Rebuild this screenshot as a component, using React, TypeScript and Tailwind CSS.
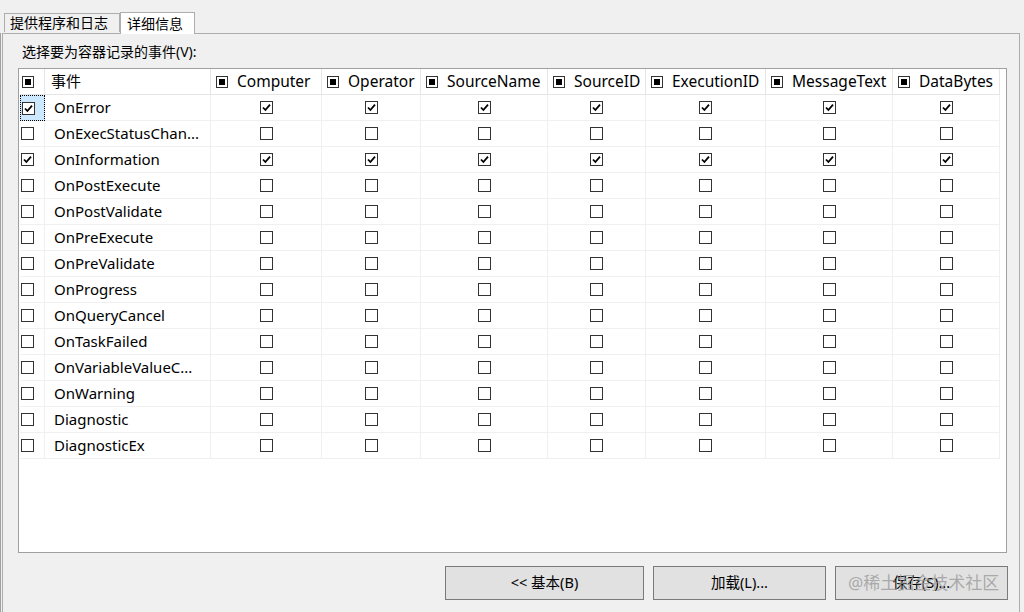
import React from 'react';

const columns = ['Computer', 'Operator', 'SourceName', 'SourceID', 'ExecutionID', 'MessageText', 'DataBytes'];

const events: { name: string; on: boolean }[] = [
  { name: 'OnError', on: true },
  { name: 'OnExecStatusChan...', on: false },
  { name: 'OnInformation', on: true },
  { name: 'OnPostExecute', on: false },
  { name: 'OnPostValidate', on: false },
  { name: 'OnPreExecute', on: false },
  { name: 'OnPreValidate', on: false },
  { name: 'OnProgress', on: false },
  { name: 'OnQueryCancel', on: false },
  { name: 'OnTaskFailed', on: false },
  { name: 'OnVariableValueC...', on: false },
  { name: 'OnWarning', on: false },
  { name: 'Diagnostic', on: false },
  { name: 'DiagnosticEx', on: false },
];

const gridCols = 'grid grid-cols-[25px_166px_111px_99px_127px_98px_120px_127px_107px]';

function CheckBox({ checked }: { checked: boolean }) {
  return (
    <span className="flex h-[13px] w-[13px] items-center justify-center border border-[#333333] bg-white">
      {checked && (
        <svg width="9" height="9" viewBox="0 0 9 9">
          <path d="M1 4.5 L3.4 7 L8 1.6" fill="none" stroke="#000" strokeWidth={1.8} />
        </svg>
      )}
    </span>
  );
}

function MixedBox() {
  return (
    <span className="flex h-[12px] w-[12px] items-center justify-center border border-[#333333] bg-white">
      <span className="h-[6px] w-[6px] bg-black" />
    </span>
  );
}

export default function App() {
  return (
    <div
      className="relative h-[612px] w-[1024px] overflow-hidden bg-[#f0f0f0] text-[15px] text-black"
      style={{ fontFamily: '"Noto Sans", "Noto Sans CJK SC", sans-serif' }}
    >
      {/* tabs */}
      <div className="flex h-[33px] items-end pl-[4px]">
        <div className="mb-[1px] flex h-[19px] w-[116px] items-center border border-b-0 border-[#adadad] bg-[#f0f0f0] pl-[5px] text-[14px] leading-none">
          提供程序和日志
        </div>
        <div className="relative z-10 -mb-[1px] flex h-[22px] w-[75px] items-center border border-b-0 border-[#adadad] bg-white pl-[6px] text-[14px] leading-none">
          详细信息
        </div>
      </div>

      {/* tab page */}
      <div className="h-[579px] w-[1020px] border-l border-[#a0a0a0] pl-[1px]">
        <div className="h-full w-full border-l border-t border-r border-[#adadad] bg-[#f0f0f0] pl-[15px] pr-[11px]">
          <div className="pl-[4px] pt-[8px] text-[14px] leading-[20px]">选择要为容器记录的事件(V):</div>

          <div className="mt-[6px] h-[485px] w-[989px] border border-[#a0a0a0] bg-white pl-[1px]">
            {/* header */}
            <div className={`${gridCols} h-[26px] text-[15.5px]`}>
              <div className="flex items-center border-r border-b border-[#e5e5e5] pl-[2px]">
                <MixedBox />
              </div>
              <div className="flex items-center border-r border-b border-[#e5e5e5] pl-[6px] text-[15px]">事件</div>
              {columns.map((c) => (
                <div key={c} className="flex items-center gap-[9px] border-r border-b border-[#e5e5e5] pl-[5px]">
                  <MixedBox />
                  <span>{c}</span>
                </div>
              ))}
            </div>

            {/* rows */}
            {events.map((e, i) => (
              <div key={e.name} className={`${gridCols} h-[26px]`}>
                <div
                  className={`flex items-center border-b border-r pl-[1px] ${
                    i === 0
                      ? 'border border-dotted border-black bg-[#cce8ff]'
                      : 'border-[#f0f0f0]'
                  }`}
                >
                  <CheckBox checked={e.on} />
                </div>
                <div className="flex items-center border-r border-b border-[#f0f0f0] pl-[9px]">{e.name}</div>
                {columns.map((c) => (
                  <div key={c} className="flex items-center justify-center border-r border-b border-[#f0f0f0]">
                    <CheckBox checked={e.on} />
                  </div>
                ))}
              </div>
            ))}
          </div>

          {/* buttons */}
          <div className="mt-[13px] flex justify-end gap-[9px]">
            <button className="h-[34px] w-[199px] border border-[#7a7a7a] bg-[#e1e1e1] text-[14.5px]">
              &lt;&lt; 基本(B)
            </button>
            <button className="h-[34px] w-[173px] border border-[#7a7a7a] bg-[#e1e1e1] text-[14.5px]">
              加载(L)...
            </button>
            <button className="relative h-[34px] w-[173px] border border-[#7a7a7a] bg-[#e1e1e1] text-[14.5px]">
              保存(S)...
              <span className="pointer-events-none absolute left-[12px] top-[5px] text-[17px] leading-[22px] text-[#9a9a9a]/80">
                @稀土掘金技术社区
              </span>
            </button>
          </div>
        </div>
      </div>
    </div>
  );
}
